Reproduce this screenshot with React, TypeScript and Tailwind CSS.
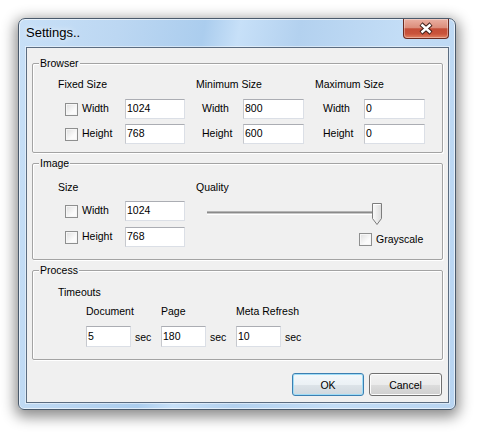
function CheckBox() {
  return (
    <span className="block w-[13px] h-[13px] shrink-0 border border-[#8e8f8f] bg-[linear-gradient(135deg,#dedede,#fbfbfb_65%)] shadow-[inset_0_0_0_1px_#f6f6f6]" />
  )
}

function TextBox({ value, className }: { value: string; className: string }) {
  return (
    <input
      readOnly
      value={value}
      className={`${className} block border border-[#dbdfe6] border-t-[#abadb3] border-l-[#c6c8cd] bg-white pl-[1px] pb-[2px] leading-[14px] text-black outline-none`}
    />
  )
}

function GroupBox({ title, className, children }: { title: string; className: string; children: React.ReactNode }) {
  return (
    <div className={`relative mx-[5px] border border-[#a3a3a3] rounded-[2px] shadow-[1px_1px_0_#fff,inset_1px_1px_0_#fff] ${className}`}>
      <span className="absolute left-[6px] -top-[7px] px-[1px] bg-[#f0f0f0] leading-[13px]">{title}</span>
      {children}
    </div>
  )
}

function SizeRow({ label, value }: { label: string; value: string }) {
  return (
    <div className="flex items-center h-[20px]">
      <span className="ml-[7px]">
        <CheckBox />
      </span>
      <span className="ml-[4px] w-[43px]">{label}</span>
      <TextBox value={value} className="w-[60px] h-[20px]" />
    </div>
  )
}

function PlainRow({ label, value, indent }: { label: string; value: string; indent: string }) {
  return (
    <div className="flex items-center h-[20px]">
      <span className={`${indent} w-[41px]`}>{label}</span>
      <TextBox value={value} className="w-[61px] h-[20px]" />
    </div>
  )
}

function Slider() {
  return (
    <svg width="180" height="24" viewBox="0 0 180 24" className="ml-[9px] mt-[8px] block">
      <defs>
        <linearGradient id="thumb" x1="0" y1="0" x2="1" y2="0">
          <stop offset="0" stopColor="#fbfbfb" />
          <stop offset="1" stopColor="#dcdcdc" />
        </linearGradient>
      </defs>
      <rect x="2" y="9" width="172" height="1" fill="#b4b4b4" />
      <rect x="2" y="10" width="172" height="1" fill="#8a8a8a" />
      <rect x="2" y="11" width="172" height="1" fill="#c9c9c9" />
      <rect x="2" y="12" width="172" height="1" fill="#ffffff" />
      <path d="M167.5 1.5 H176.5 V16.5 L172 22.5 L167.5 16.5 Z" fill="url(#thumb)" stroke="#7d7d7d" strokeWidth="1" />
      <path d="M168.5 2.5 H175.5" stroke="#ffffff" strokeWidth="1" />
    </svg>
  )
}

function Timeout({ label, value }: { label: string; value: string }) {
  return (
    <div className="w-[75px]">
      <div className="leading-[13px]">{label}</div>
      <div className="mt-[8px] flex items-center">
        <TextBox value={value} className="w-[45px] h-[21px]" />
        <span className="ml-[4px] mt-[2px]">sec</span>
      </div>
    </div>
  )
}

export default function App() {
  return (
    <div className="w-[478px] h-[432px] bg-white pl-[18px] pt-[18px] font-['Liberation_Sans',Arial,sans-serif] text-[10.5px] text-black">
      <div className="w-[438px] h-[392px] flex flex-col rounded-t-[7px] rounded-b-[6px] border border-[#4a5a6c] bg-[linear-gradient(100deg,#c8e0f7_0%,#bcd7f2_20%,#abcdee_37%,#c7e0f8_44%,#b3d1ef_56%,#c3ddf6_76%,#b8d4f1_100%)] shadow-[inset_0_0_0_1px_rgba(255,255,255,0.6),0_4px_14px_3px_rgba(0,0,0,0.45)]">
        <div className="h-[28px] flex items-start">
          <span className="pl-[7px] pt-[6px] leading-[16px] text-[13px] [text-shadow:0_0_6px_#fff]">Settings..</span>
          <div className="ml-auto mr-[6px] w-[46px] h-[20px] rounded-b-[4px] border border-t-0 border-[#6a2a20] bg-[linear-gradient(#eab0a2_0%,#dc8e7c_45%,#c44d37_52%,#c9533b_78%,#e28262_100%)] shadow-[inset_0_0_0_1px_rgba(255,255,255,0.35)]">
            <svg width="44" height="19" viewBox="0 0 44 19" className="block">
              <path d="M17 5 L27 14 M27 5 L17 14" stroke="#3e1d17" strokeWidth="4.4" />
              <path d="M17.5 5.5 L26.5 13.5 M26.5 5.5 L17.5 13.5" stroke="#ffffff" strokeWidth="2.4" />
            </svg>
          </div>
        </div>
        <div className="ml-[7px] w-[423px] h-[356px] border border-[#5b6c80] bg-[#f0f0f0] shadow-[0_0_0_1px_rgba(255,255,255,0.45)] flex flex-col">
          <GroupBox title="Browser" className="mt-[15px] h-[90px]">
            <div className="flex pl-[25px] pt-[14px]">
              <div className="w-[138px]">
                <div className="leading-[13px]">Fixed Size</div>
                <div className="mt-[8px] flex flex-col gap-[5px]">
                  <SizeRow label="Width" value="1024" />
                  <SizeRow label="Height" value="768" />
                </div>
              </div>
              <div className="w-[119px]">
                <div className="leading-[13px]">Minimum Size</div>
                <div className="mt-[8px] flex flex-col gap-[5px]">
                  <PlainRow label="Width" value="800" indent="ml-[6px]" />
                  <PlainRow label="Height" value="600" indent="ml-[6px]" />
                </div>
              </div>
              <div>
                <div className="leading-[13px]">Maximum Size</div>
                <div className="mt-[8px] flex flex-col gap-[5px]">
                  <PlainRow label="Width" value="0" indent="ml-[8px]" />
                  <PlainRow label="Height" value="0" indent="ml-[8px]" />
                </div>
              </div>
            </div>
          </GroupBox>

          <GroupBox title="Image" className="mt-[10px] h-[97px]">
            <div className="flex pl-[25px] pt-[17px]">
              <div className="w-[138px]">
                <div className="leading-[13px]">Size</div>
                <div className="mt-[7px] flex flex-col gap-[6px]">
                  <SizeRow label="Width" value="1024" />
                  <SizeRow label="Height" value="768" />
                </div>
              </div>
              <div>
                <div className="leading-[13px]">Quality</div>
                <Slider />
                <div className="mt-[6px] ml-[163px] flex items-center">
                  <CheckBox />
                  <span className="ml-[4px]">Grayscale</span>
                </div>
              </div>
            </div>
          </GroupBox>

          <GroupBox title="Process" className="mt-[10px] h-[90px]">
            <div className="pl-[25px] pt-[15px]">
              <div className="leading-[13px]">Timeouts</div>
              <div className="mt-[6px] ml-[28px] flex">
                <Timeout label="Document" value="5" />
                <Timeout label="Page" value="180" />
                <Timeout label="Meta Refresh" value="10" />
              </div>
            </div>
          </GroupBox>

          <div className="mt-[13px] mr-[6px] flex justify-end gap-[5px]">
            <button className="w-[72px] h-[23px] rounded-[3px] border border-[#3c7fb1] bg-[linear-gradient(#f3f8fb_0%,#ebf1f5_50%,#dde4e9_50%,#d0d8de_100%)] shadow-[inset_0_0_0_1px_#9fdcf6] leading-[14px]">
              OK
            </button>
            <button className="w-[73px] h-[23px] rounded-[3px] border border-[#707070] bg-[linear-gradient(#f2f2f2_0%,#ebebeb_50%,#dddddd_50%,#cfcfcf_100%)] shadow-[inset_0_0_0_1px_#fcfcfc] leading-[14px]">
              Cancel
            </button>
          </div>
        </div>
      </div>
    </div>
  )
}
